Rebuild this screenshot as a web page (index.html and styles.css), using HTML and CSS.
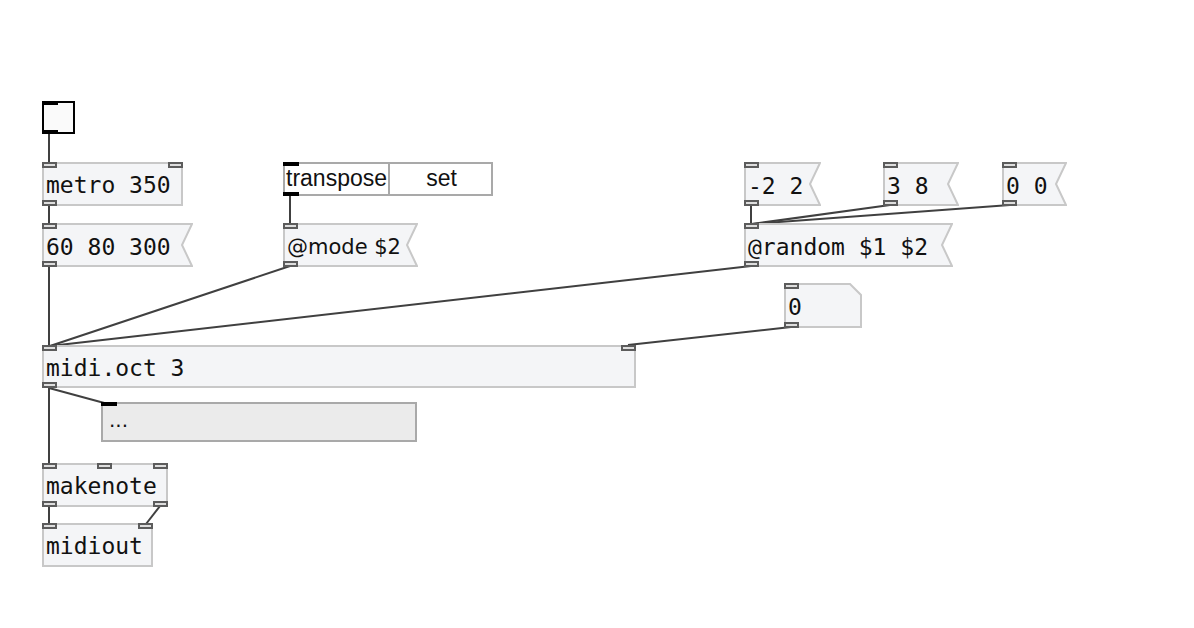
FILE: index.html
```html
<!DOCTYPE html>
<html lang="en">
<head>
  <meta charset="UTF-8">
  <title>midi.oct patch</title>
  <link rel="stylesheet" href="styles.css">
</head>
<body>
  <div class="patch">
    <!-- patch cords -->
    <svg class="wires" width="1194" height="628">
      <line x1="49" y1="134" x2="49" y2="163"/>
      <line x1="49" y1="206" x2="49" y2="223"/>
      <line x1="49" y1="267" x2="49" y2="345"/>
      <line x1="290" y1="196" x2="290" y2="223"/>
      <line x1="290" y1="266" x2="50" y2="346"/>
      <line x1="751" y1="266" x2="50" y2="346"/>
      <line x1="751" y1="206" x2="751" y2="223"/>
      <line x1="890" y1="205" x2="752" y2="224"/>
      <line x1="1010" y1="205" x2="752" y2="224"/>
      <line x1="791" y1="327" x2="628" y2="345"/>
      <line x1="49" y1="388" x2="49" y2="463"/>
      <line x1="49" y1="388" x2="108" y2="404"/>
      <line x1="49" y1="507" x2="49" y2="523"/>
      <line x1="160" y1="506" x2="146" y2="524"/>
    </svg>

    <div class="obj bang">
      <span class="bar bar-top"></span>
      <span class="bar bar-bottom"></span>
    </div>

    <div class="obj box n-metro">metro 350
      <i class="port in p-left"></i><i class="port in p-right"></i><i class="port out p-left"></i>
    </div>

    <div class="obj msg n-notes">
      <svg class="shape" width="151" height="44"><polygon points="1,1 150,1 140,22 150,43 1,43"/></svg>
      <span class="label">60 80 300</span>
      <i class="port in p-left"></i><i class="port out p-left"></i>
    </div>

    <div class="obj tab n-tab">
      <span class="cell">transpose</span>
      <span class="cell cell-set">set</span>
      <span class="bar bar-top"></span>
      <span class="bar bar-bottom"></span>
    </div>

    <div class="obj msg n-mode">
      <svg class="shape" width="135" height="44"><polygon points="1,1 134,1 124,22 134,43 1,43"/></svg>
      <span class="label label-sans">@mode $2</span>
      <i class="port in p-left"></i><i class="port out p-left"></i>
    </div>

    <div class="obj msg n-r1">
      <svg class="shape" width="77" height="44"><polygon points="1,1 76,1 66,22 76,43 1,43"/></svg>
      <span class="label">-2 2</span>
      <i class="port in p-left"></i><i class="port out p-left"></i>
    </div>
    <div class="obj msg n-r2">
      <svg class="shape" width="76" height="44"><polygon points="1,1 75,1 65,22 75,43 1,43"/></svg>
      <span class="label">3 8</span>
      <i class="port in p-left"></i><i class="port out p-left"></i>
    </div>
    <div class="obj msg n-r3">
      <svg class="shape" width="65" height="44"><polygon points="1,1 64,1 54,22 64,43 1,43"/></svg>
      <span class="label">0 0</span>
      <i class="port in p-left"></i><i class="port out p-left"></i>
    </div>

    <div class="obj msg n-random">
      <svg class="shape" width="209" height="44"><polygon points="1,1 208,1 198,22 208,43 1,43"/></svg>
      <span class="label">@random $1 $2</span>
      <i class="port in p-left"></i><i class="port out p-left"></i>
    </div>

    <div class="obj msg n-num">
      <svg class="shape" width="78" height="45"><polygon points="1,1 66,1 77,12 77,44 1,44"/></svg>
      <span class="label">0</span>
      <i class="port in p-left"></i><i class="port out p-left"></i>
    </div>

    <div class="obj box n-oct">midi.oct 3
      <i class="port in p-left"></i><i class="port in p-right"></i><i class="port out p-left"></i>
    </div>

    <div class="obj display n-display">...
      <span class="bar bar-top"></span>
    </div>

    <div class="obj box n-makenote">makenote
      <i class="port in p-left"></i><i class="port in p-mid"></i><i class="port in p-right"></i>
      <i class="port out p-left"></i><i class="port out p-right"></i>
    </div>

    <div class="obj box n-midiout">midiout
      <i class="port in p-left"></i><i class="port in p-right"></i>
    </div>
  </div>
</body>
</html>
```

FILE: styles.css
```css
body {
  margin: 0;
  background: #fff;
  overflow: hidden;
}
.patch {
  position: relative;
  width: 1194px;
  height: 628px;
  font-family: 'DejaVu Sans Mono', monospace;
  font-size: 23px;
  color: #111;
}
.wires {
  position: absolute;
  left: 0;
  top: 0;
}
.wires line {
  stroke: #404040;
  stroke-width: 2;
}

/* --- objects on the canvas --- */
.obj {
  position: absolute;
  box-sizing: border-box;
  white-space: nowrap;
}
.box {
  background: #f4f5f7;
  box-shadow: inset 0 0 0 2px #c8c8c8;
  padding: 2px 0 0 4px;
  line-height: 43px;
}
.msg .shape {
  position: absolute;
  left: 0;
  top: 0;
}
.msg .shape polygon {
  fill: #f4f5f7;
  stroke: #c8c8c8;
  stroke-width: 2;
}
.msg .label {
  position: relative;
  display: block;
  padding: 2px 0 0 4px;
  line-height: 44px;
}
.label-sans {
  font-family: 'DejaVu Sans', sans-serif;
  font-size: 21px;
}

.port {
  position: absolute;
  width: 15px;
  height: 6px;
  box-sizing: border-box;
  border: 2px solid #5c5c5c;
  background: #dedede;
}
.port.in { top: 0; }
.port.out { bottom: 0; }
.p-left { left: 0; }
.p-right { right: 0; }
.p-mid { left: 55px; }

.bar {
  position: absolute;
  left: 0;
  width: 16px;
  height: 4px;
  background: #000;
}
.bar-top { top: 0; }
.bar-bottom { bottom: 0; }

.bang {
  left: 42px;
  top: 101px;
  width: 33px;
  height: 33px;
  border: 2px solid #000;
  background: #fafafa;
}
.bang .bar { left: -2px; }
.bang .bar-top { top: -2px; }
.bang .bar-bottom { bottom: -2px; }

.tab {
  display: flex;
  background: #fff;
  box-shadow: inset 0 0 0 2px #a9a9a9;
  font-family: 'Liberation Sans', sans-serif;
  font-size: 23px;
  line-height: 33px;
}
.tab .cell {
  width: 105px;
  padding-left: 3px;
  box-sizing: border-box;
}
.tab .cell-set {
  border-left: 2px solid #a9a9a9;
  text-align: center;
  padding-left: 0;
}

.display {
  background: #ebebeb;
  box-shadow: inset 0 0 0 2px #a9a9a9;
  font-family: 'DejaVu Sans', sans-serif;
  font-size: 20px;
  line-height: 36px;
  padding-left: 8px;
}

/* --- placement --- */
.n-metro { left: 42px; top: 162px; width: 141px; height: 44px; }
.n-notes { left: 42px; top: 223px; width: 151px; height: 44px; }
.n-tab { left: 283px; top: 162px; width: 210px; height: 34px; }
.n-mode { left: 283px; top: 223px; width: 135px; height: 44px; }
.n-r1 { left: 744px; top: 162px; width: 77px; height: 44px; }
.n-r2 { left: 883px; top: 162px; width: 76px; height: 44px; }
.n-r3 { left: 1002px; top: 162px; width: 65px; height: 44px; }
.n-random { left: 744px; top: 223px; width: 209px; height: 44px; }
.n-num { left: 784px; top: 283px; width: 78px; height: 45px; }
.n-oct { left: 42px; top: 345px; width: 594px; height: 43px; }
.n-display { left: 101px; top: 402px; width: 316px; height: 40px; }
.n-makenote { left: 42px; top: 463px; width: 126px; height: 44px; }
.n-midiout { left: 42px; top: 523px; width: 111px; height: 44px; }
```
